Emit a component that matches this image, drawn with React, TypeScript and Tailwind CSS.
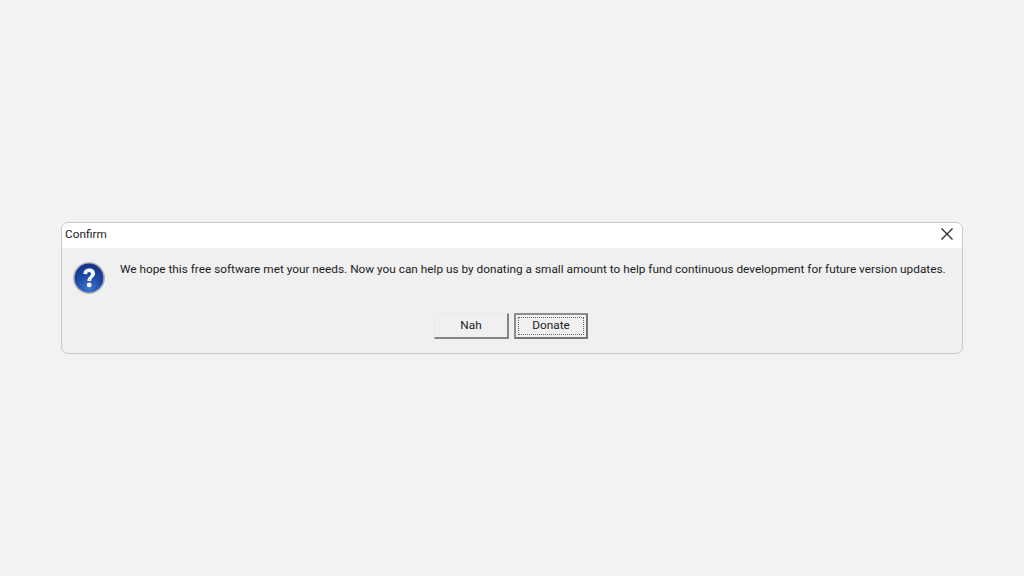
export default function App() {
  return (
    <div className="flex h-[576px] w-[1024px] items-center justify-center bg-[#f2f2f2] font-['Roboto',sans-serif] text-[11.8px] text-[#1c1c1c]">
      <div className="flex h-[132px] w-[902px] flex-col overflow-hidden rounded-[7px] border border-[#c8c8c8] bg-[#f0f0f0]">
        <div className="flex h-[25px] items-start justify-between bg-white pl-[3px] pr-[8px]">
          <span className="mt-[3px]">Confirm</span>
          <svg width="14" height="14" viewBox="0 0 14 14" className="mt-[4px]">
            <path d="M1.5 1.5 L12.5 12.5 M12.5 1.5 L1.5 12.5" stroke="#2a2a2a" strokeWidth="1.3" fill="none" />
          </svg>
        </div>
        <div className="flex h-[34px] items-start pl-[10px] pt-[13px]">
          <svg width="34" height="34" viewBox="0 0 34 34" className="shrink-0">
            <defs>
              <radialGradient id="q" cx="50%" cy="85%" r="80%">
                <stop offset="0%" stopColor="#3f78d0" />
                <stop offset="55%" stopColor="#1f4aa8" />
                <stop offset="100%" stopColor="#16348a" />
              </radialGradient>
            </defs>
            <circle cx="17" cy="17" r="16" fill="#b4b6ba" />
            <circle cx="17" cy="17" r="14.4" fill="url(#q)" />
            <path d="M11.4 12.9 C11.6 9.2 14.2 7.6 17.2 7.6 C20.7 7.6 23 9.6 23 12.5 C23 16.2 19.2 16.5 19.2 20 H15.4 C15.2 15.8 19 15.3 19 12.9 C19 11.8 18.3 11 17.1 11 C15.9 11 15.2 11.9 15.1 13.3 Z" fill="#f6f8fc" />
            <circle cx="17.2" cy="23.9" r="2.4" fill="#f6f8fc" />
          </svg>
          <p className="ml-[14px] whitespace-nowrap">We hope this free software met your needs. Now you can help us by donating a small amount to help fund continuous development for future version updates.</p>
        </div>
        <div className="mt-[31px] flex justify-center gap-[5px] pr-[2px]">
          <button className="h-[26px] w-[75px] border border-b-2 border-r-2 border-[#e9e9e9] border-b-[#858585] border-r-[#858585] bg-[#f0f0f0]">Nah</button>
          <button className="h-[26px] w-[74px] border-2 border-[#767676] border-l-[#8e8e8e] border-t-[#8e8e8e] bg-[#f0f0f0] p-[2px]">
            <span className="flex h-full w-full items-center justify-center border border-dotted border-[#666]">Donate</span>
          </button>
        </div>
      </div>
    </div>
  );
}
